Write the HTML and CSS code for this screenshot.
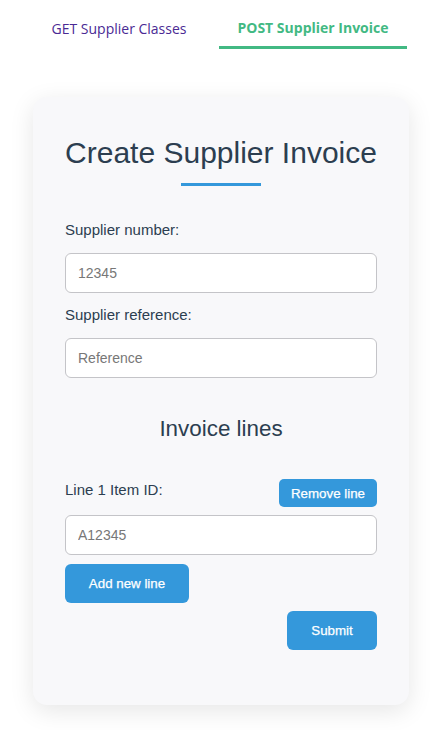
FILE: index.html
```html
<!DOCTYPE html>
<html lang="en">
<head>
<meta charset="utf-8">
<title>Create Supplier Invoice</title>
<link rel="stylesheet" href="styles.css">
</head>
<body>
<nav class="tabs">
  <a class="tab" href="#">GET Supplier Classes</a>
  <a class="tab active" href="#">POST Supplier Invoice</a>
</nav>
<main class="card">
  <h1 class="title">Create Supplier Invoice</h1>
  <div class="title-bar"></div>
  <form class="form">
    <label class="label">Supplier number:</label>
    <input class="input" type="text" placeholder="12345">
    <label class="label label-2">Supplier reference:</label>
    <input class="input" type="text" placeholder="Reference">
    <h2 class="subtitle">Invoice lines</h2>
    <div class="line-head">
      <label class="label">Line 1 Item ID:</label>
      <button class="btn btn-small" type="button">Remove line</button>
    </div>
    <input class="input input-line" type="text" placeholder="A12345">
    <div class="add-row">
      <button class="btn btn-add" type="button">Add new line</button>
    </div>
    <div class="submit-row">
      <button class="btn btn-submit" type="button">Submit</button>
    </div>
  </form>
</main>
</body>
</html>
```

FILE: styles.css
```css
* { box-sizing: border-box; }
html, body { margin: 0; padding: 0; background: #ffffff; }
body {
  font-family: "Liberation Sans", Arial, sans-serif;
  color: #2c3e50;
  width: 432px;
  height: 730px;
  overflow: hidden;
}
.tabs {
  display: flex;
  gap: 6px;
  padding: 0 25px;
  height: 49px;
}
.tab {
  flex: 1;
  display: flex;
  align-items: center;
  justify-content: center;
  padding-top: 9px;
  text-decoration: none;
  font-family: "Open Sans", "Noto Sans", sans-serif;
  font-size: 14px;
  color: #4a2a94;
  border-bottom: 2px solid transparent;
}
.tab.active {
  color: #42b983;
  font-weight: 700;
  border-bottom: 3px solid #42b983;
  padding-top: 8px;
}
.card {
  margin: 48px 23px 0 33px;
  height: 608px;
  background: #f8f8fa;
  border-radius: 14px;
  box-shadow: 0 6px 24px rgba(0, 0, 0, 0.10);
  padding: 38px 32px 0;
  display: flex;
  flex-direction: column;
}
.title {
  margin: 0;
  text-align: center;
  font-weight: 400;
  font-size: 30px;
  line-height: 36px;
  color: #2c3e50;
}
.title-bar {
  width: 80px;
  height: 3px;
  background: #3498db;
  margin: 12px auto 0;
}
.form {
  display: flex;
  flex-direction: column;
  margin-top: 35px;
}
.label {
  font-size: 15px;
  line-height: 18px;
  color: #2c3e50;
}
.label-2 { margin-top: 13px; }
.input {
  margin-top: 14px;
  height: 40px;
  width: 100%;
  border: 1px solid #c4c4c8;
  border-radius: 6px;
  background: #ffffff;
  padding: 0 12px;
  font-family: "Liberation Sans", Arial, sans-serif;
  font-size: 14px;
  color: #2c3e50;
}
.input::placeholder { color: #777777; }
.subtitle {
  margin: 38px 0 0;
  text-align: center;
  font-weight: 400;
  font-size: 22.4px;
  line-height: 26px;
  color: #2c3e50;
}
.line-head {
  margin-top: 37px;
  display: flex;
  justify-content: space-between;
  align-items: flex-start;
}
.line-head .label { margin-top: 2px; }
.input-line { margin-top: 8px; }
.btn {
  border: none;
  background: #3498db;
  color: #ffffff;
  font-family: "Liberation Sans", Arial, sans-serif;
  font-weight: 400;
  font-size: 13.33px;
  -webkit-text-stroke: 0.25px #ffffff;
  border-radius: 6px;
  cursor: pointer;
  white-space: nowrap;
  padding: 0;
}
.btn-small {
  height: 28px;
  width: 98px;
  border-radius: 5px;
}
.add-row { margin-top: 9px; display: flex; }
.btn-add { width: 124px; height: 39px; }
.submit-row { margin-top: 8px; display: flex; justify-content: flex-end; }
.btn-submit { width: 90px; height: 39px; }
```
